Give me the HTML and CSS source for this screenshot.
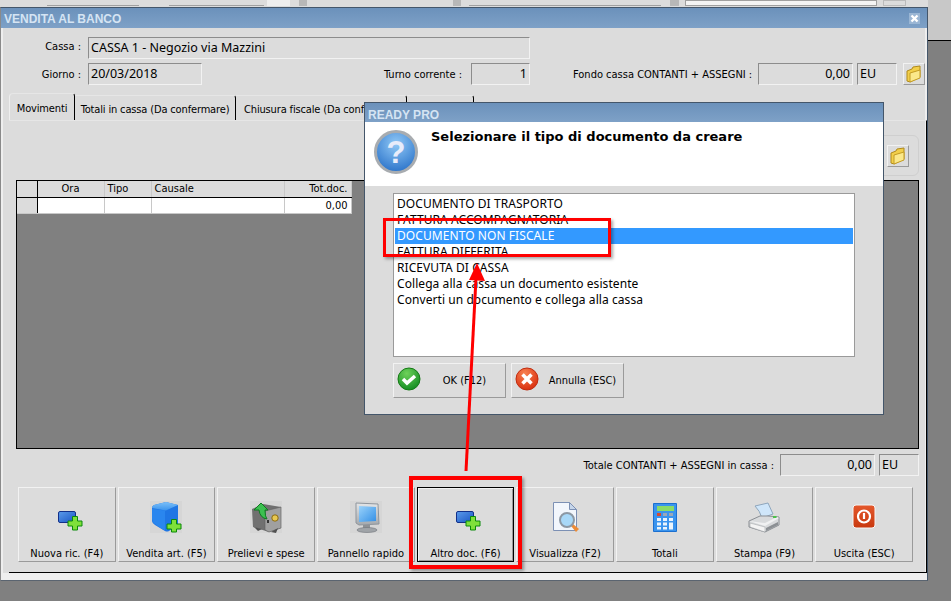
FILE: index.html

```html
<!DOCTYPE html>
<html lang="it">
<head>
  <meta charset="UTF-8">
  <title>Vendita al banco</title>
  <link rel="stylesheet" href="styles.css">
</head>
<body>

<svg class="defs" width="0" height="0">
  <defs>
    <linearGradient id="blueRect" x1="0" y1="0" x2="1" y2="1"><stop offset="0" stop-color="#5b9bea"/><stop offset="1" stop-color="#1a55c4"/></linearGradient>
    <linearGradient id="cubeTop" x1="0" y1="0" x2="0" y2="1"><stop offset="0" stop-color="#7cc0f8"/><stop offset="1" stop-color="#3a94ee"/></linearGradient>
    <linearGradient id="screen" x1="0" y1="0" x2="1" y2="1"><stop offset="0" stop-color="#9ad2fa"/><stop offset="1" stop-color="#3490e6"/></linearGradient>
    <linearGradient id="metal" x1="0" y1="0" x2="0" y2="1"><stop offset="0" stop-color="#e4e6e8"/><stop offset="1" stop-color="#a4a8ac"/></linearGradient>
    <linearGradient id="power" x1="0" y1="0" x2="0" y2="1"><stop offset="0" stop-color="#e4582c"/><stop offset="1" stop-color="#c8380e"/></linearGradient>
    <radialGradient id="qfill" cx="50%" cy="30%" r="70%"><stop offset="0" stop-color="#90c8f6"/><stop offset="1" stop-color="#2c74ca"/></radialGradient>
    <radialGradient id="okFill" cx="40%" cy="25%" r="80%"><stop offset="0" stop-color="#6fd25a"/><stop offset="1" stop-color="#108a20"/></radialGradient>
    <radialGradient id="koFill" cx="40%" cy="25%" r="80%"><stop offset="0" stop-color="#f88050"/><stop offset="1" stop-color="#d82c0c"/></radialGradient>
  </defs>
</svg>

<div class="backdrop">
  <div class="strip">
    <span class="strip-bar s1"></span>
    <span class="strip-bar s2"></span>
    <span class="strip-light s7"></span>
    <span class="strip-thumb s3"></span>
    <span class="strip-thumb s6"></span>
    <span class="strip-bar s4"></span>
    <span class="strip-thumb s5"></span>
    <span class="strip-field"></span>
    <span class="strip-btn"></span>
  </div>
</div>

<!-- finestra principale -->
<div class="window main-window">
  <div class="titlebar">
    <span class="title-text">VENDITA AL BANCO</span>
    <span class="close-btn">
      <svg width="11" height="11" viewBox="0 0 11 11"><path d="M2.500 2.500l6 6M8.500 2.500l-6 6" stroke="#fff" stroke-width="2.400"/></svg>
    </span>
  </div>
  <div class="window-body">

    <div class="row row-cassa">
      <label class="lbl lbl-first lbl-up">Cassa :</label>
      <div class="field field-cassa big">CASSA 1 - Negozio via Mazzini</div>
    </div>

    <div class="row row-giorno">
      <label class="lbl lbl-first">Giorno :</label>
      <div class="field field-giorno big">20/03/2018</div>
      <label class="lbl lbl-turno">Turno corrente :</label>
      <div class="field field-turno num big">1</div>
      <label class="lbl lbl-fondo">Fondo cassa CONTANTI + ASSEGNI :</label>
      <div class="field field-fondo num big">0,00</div>
      <div class="field field-eu big">EU</div>
      <div class="folder-btn folder-top">
        <svg width="18" height="18" viewBox="0 0 18 18"><path d="M2 6l5-2 1-2 7-1v11l-10 5-3-1z" fill="#f2cf4a" stroke="#b08a1c"/><path d="M5 8l10-3v8l-10 4z" fill="#fbe88a" stroke="#c49c24"/></svg>
      </div>
    </div>

    <div class="tabs">
      <div class="tab tab-active">Movimenti</div>
      <div class="tab tab-totali">Totali in cassa (Da confermare)</div>
      <div class="tab tab-chiusura">Chiusura fiscale (Da confermare)</div>
      <div class="tab tab-last"></div>
    </div>

    <div class="pane">
      <div class="toolbar">
        <div class="folder-btn folder-tool">
          <svg width="18" height="18" viewBox="0 0 18 18"><path d="M2 6l5-2 1-2 7-1v11l-10 5-3-1z" fill="#f2cf4a" stroke="#b08a1c"/><path d="M5 8l10-3v8l-10 4z" fill="#fbe88a" stroke="#c49c24"/></svg>
        </div>
      </div>

      <div class="grid-box">
        <table class="grid">
          <thead>
            <tr>
              <th class="c-ind"></th>
              <th class="c-ora center">Ora</th>
              <th class="c-tipo">Tipo</th>
              <th class="c-causale">Causale</th>
              <th class="c-tot right">Tot.doc.</th>
            </tr>
          </thead>
          <tbody>
            <tr>
              <td class="c-ind ind-cell"></td>
              <td></td>
              <td></td>
              <td></td>
              <td class="right">0,00</td>
            </tr>
          </tbody>
        </table>
      </div>

      <div class="total-row">
        <label class="lbl">Totale CONTANTI + ASSEGNI in cassa :</label>
        <div class="field field-fondo num big">0,00</div>
        <div class="field field-eu big">EU</div>
      </div>

      <div class="actions">
        <button class="action">
          <svg class="ico" width="32" height="32" viewBox="0 0 32 32"><rect x="7.500" y="10.500" width="17" height="11" rx="1.500" fill="url(#blueRect)" stroke="#12308a"/><path d="M21.500 15.500h5v4.500h4.500v5h-4.500v4h-5v-4H17v-5h4.500z" fill="#7fe03a" stroke="#0a8a0a"/></svg>
          <span>Nuova ric. (F4)</span>
        </button>
        <button class="action">
          <svg class="ico ico-bg" width="32" height="32" viewBox="0 0 32 32"><path d="M2 7q0-2 2-3l12-3 12 3v20l-9 6q-2 1-4 0l-10-6q-3-2-3-4z" fill="#1f76e4"/><path d="M2 7q0-2 2-3l12-3 12 3-11 5q-2 1-4 0z" fill="url(#cubeTop)"/><path d="M15 9.500v20l-3-1.500-7-5q-3-2-3-5V8z" fill="#2a86ee"/><path d="M21.500 18.500h5v4.500h4.500v5h-4.500v3h-5v-3H17v-5h4.500z" fill="#7fe03a" stroke="#0a8a0a"/></svg>
          <span>Vendita art. (F5)</span>
        </button>
        <button class="action">
          <svg class="ico ico-bg" width="32" height="32" viewBox="0 0 32 32"><path d="M2 8l11-5 18 3v21l-12 4-16-5z" fill="#707070"/><path d="M15 10l16-4v21l-12 4-4-2z" fill="#a0a0a0" stroke="#606060" stroke-width=".6"/><path d="M4 26l4 4 4-2zM21 31l5 1 2-5z" fill="#505050"/><path d="M17 19h2v3h-2z" fill="#333"/><circle cx="25" cy="17" r="3.200" fill="#e8c850" stroke="#8a6a14"/><path d="M11 2l7 7h-3q0 7 2 9-7-1-8-9H4z" fill="#3cc050" stroke="#0e7a20"/></svg>
          <span>Prelievi e spese</span>
        </button>
        <button class="action">
          <svg class="ico ico-bg" width="32" height="32" viewBox="0 0 32 32"><path d="M6 2l22 1 1 20-20 1-3-2z" fill="url(#metal)" stroke="#8f959c"/><path d="M9 5l17 1v14l-17 1z" fill="url(#screen)"/><path d="M13 24h7v4h-7z" fill="#8e9296"/><ellipse cx="17" cy="29" rx="10" ry="2.500" fill="#a0a4a8" stroke="#70747a" stroke-width=".6"/></svg>
          <span>Pannello rapido</span>
        </button>
        <button class="action action-focus">
          <svg class="ico" width="32" height="32" viewBox="0 0 32 32"><rect x="7.500" y="10.500" width="17" height="11" rx="1.500" fill="url(#blueRect)" stroke="#12308a"/><path d="M21.500 15.500h5v4.500h4.500v5h-4.500v4h-5v-4H17v-5h4.500z" fill="#7fe03a" stroke="#0a8a0a"/></svg>
          <span>Altro doc. (F6)</span>
        </button>
        <button class="action">
          <svg class="ico" width="32" height="32" viewBox="0 0 32 32"><path d="M4.500 1.500h16l7 7v21h-23z" fill="#f2f6fc" stroke="#7c90b4"/><path d="M20.500 1.500v7h7z" fill="#c6d6ea" stroke="#7c90b4"/><path d="M22 25l5 6 3-3-6-5z" fill="#ec8c38"/><circle cx="18" cy="19" r="7" fill="#a8d8f8" stroke="#8c98a4" stroke-width="2"/></svg>
          <span>Visualizza (F2)</span>
        </button>
        <button class="action">
          <svg class="ico" width="32" height="32" viewBox="0 0 32 32"><path d="M4.500 2.500h23v28h-23z" fill="#3a94ee" stroke="#1c70d0"/><rect x="8" y="5" width="17" height="5" fill="#8adc68"/><rect x="8" y="12" width="4" height="3" fill="#d84a30"/><rect x="14" y="12" width="4" height="3" fill="#9aa8b8"/><rect x="20" y="12" width="4" height="3" fill="#9aa8b8"/><path d="M8 17h4v3H8zM14 17h4v3h-4zM20 17h4v3h-4zM8 21.500h4v3H8zM14 21.500h4v3h-4zM20 21.500h4v7h-4zM8 26h4v2.500H8zM14 26h4v2.500h-4z" fill="#eaf4fc"/></svg>
          <span>Totali</span>
        </button>
        <button class="action">
          <svg class="ico" width="32" height="32" viewBox="0 0 32 32"><path d="M7 5l13-3 5 11-11 4q-2-7-7-12z" fill="#cfe6fa" stroke="#8ea6bc"/><path d="M1 20l11-5 8 0 11 1v8l-14 7-16-5z" fill="#d8dadc" stroke="#8a8e93"/><path d="M1 20l16 5 14-8-2-1-12 6z" fill="#f0f1f2"/><path d="M2 22l15 4v5L2 26z" fill="#f4f4f4" stroke="#9a9ea2" stroke-width=".5"/><path d="M18 27l12-6v3l-12 6z" fill="#8c9094"/><rect x="25" y="15" width="3.500" height="2" fill="#4cc04c"/></svg>
          <span>Stampa (F9)</span>
        </button>
        <button class="action">
          <svg class="ico" width="32" height="32" viewBox="0 0 32 32"><rect x="5" y="4" width="22" height="23" rx="3" fill="url(#power)" stroke="#f6f6f6"/><circle cx="16" cy="15.500" r="6" fill="none" stroke="#fff" stroke-width="2.200"/><path d="M16 12v6" stroke="#fff" stroke-width="2.200"/></svg>
          <span>Uscita (ESC)</span>
        </button>
      </div>
    </div>
  </div>
</div>

<!-- dialogo tipo documento -->
<div class="window dialog">
  <div class="titlebar dialog-title">
    <span class="title-text">READY PRO</span>
  </div>
  <div class="dialog-head">
    <svg class="q-ico" width="46" height="46" viewBox="0 0 46 46">
      <circle cx="23" cy="23" r="20.500" fill="url(#qfill)" stroke="#a8acb0" stroke-width="3"/>
      <text x="23" y="34" class="q-mark">?</text>
    </svg>
    <h2 class="dialog-heading">Selezionare il tipo di documento da creare</h2>
  </div>
  <div class="dialog-body">
    <ul class="doc-list">
      <li>DOCUMENTO DI TRASPORTO</li>
      <li>FATTURA ACCOMPAGNATORIA</li>
      <li class="selected">DOCUMENTO NON FISCALE</li>
      <li>FATTURA DIFFERITA</li>
      <li>RICEVUTA DI CASSA</li>
      <li>Collega alla cassa un documento esistente</li>
      <li>Converti un documento e collega alla cassa</li>
    </ul>
    <div class="dialog-buttons">
      <button class="dlg-btn">
        <svg width="24" height="24" viewBox="0 0 24 24"><circle cx="12" cy="12" r="11" fill="url(#okFill)" stroke="#157a15"/><path d="M6 12l4 4 8-7" fill="none" stroke="#fff" stroke-width="3.500"/></svg>
        <span>OK (F12)</span>
      </button>
      <button class="dlg-btn">
        <svg width="24" height="24" viewBox="0 0 24 24"><circle cx="12" cy="12" r="11" fill="url(#koFill)" stroke="#c02c10"/><path d="M7.500 7.500l9 9M16.500 7.500l-9 9" fill="none" stroke="#fff" stroke-width="3.500"/></svg>
        <span>Annulla (ESC)</span>
      </button>
    </div>
  </div>
</div>

<!-- annotazioni rosse -->
<div class="mark mark-list"></div>
<div class="mark mark-btn"></div>
<svg class="arrow" width="40" height="230" viewBox="0 0 40 230">
  <path d="M11 221L21 28" stroke="#f00" stroke-width="3" fill="none"/>
  <path d="M22 13l8 18-16-1z" fill="#f00"/>
</svg>

</body>
</html>
```

FILE: styles.css

```css
* {
  box-sizing: border-box;
}
html, body {
  margin: 0;
  height: 100%;
}
body {
  width: 951px;
  height: 601px;
  overflow: hidden;
  background-color: #808080;
  font-family: "DejaVu Sans Condensed", "DejaVu Sans", sans-serif;
  font-size: 11px;
  color: #000;
  position: relative;
}
ul {
  list-style: none;
  margin: 0;
  padding: 0;
}
.defs {
  position: absolute;
}

/* quello che si vede dietro */
.backdrop {
  height: 41px;
  margin-left: 928px;
  background-color: #c8c8c8;
  border-bottom: 1px solid #000;
}
.strip {
  position: absolute;
  left: 0;
  top: 0;
  width: 928px;
  height: 7px;
  background-color: #dcdcdc;
}
.strip span {
  position: absolute;
  top: 0;
  height: 6px;
}
.strip-bar {
  border-bottom: 1px solid #a0a0a0;
}
.s1 { left: 47px; width: 92px; }
.s2 { left: 169px; width: 95px; }
.s7 { left: 267px; width: 23px; background-color: #eeeeee; }
.s3 { left: 299px; width: 8px; background-color: #b8b8b8; }
.s6 { left: 453px; width: 8px; background-color: #b8b8b8; }
.s4 { left: 469px; width: 192px; }
.s5 { left: 670px; width: 9px; background-color: #b8b8b8; }
.strip-field {
  left: 685px;
  width: 192px;
  border: 1px solid #a0a0a0;
  background-color: #f4f4f4;
}
.strip-btn {
  left: 883px;
  width: 23px;
  border: 1px solid #bbb;
}

/* finestre */
.window {
  position: absolute;
  border: 1px solid #44566a;
  background-color: #dcdcdc;
}
.main-window {
  left: 0;
  top: 7px;
  width: 928px;
  height: 574px;
  border-left-color: #8a8a8a;
  border-bottom-color: #5a6470;
}
.titlebar {
  height: 20px;
  background: linear-gradient(#6b91bb, #7ea1c7);
  display: flex;
  align-items: center;
  justify-content: space-between;
  padding: 2px 3px 0;
}
.title-text {
  color: #d5e4f3;
  font-family: "Liberation Sans", Arial, sans-serif;
  font-weight: bold;
  font-size: 12px;
}
.close-btn {
  width: 11px;
  height: 11px;
  margin: -2px 4px 0 0;
  background-color: #9ab6d4;
}
.close-btn svg {
  display: block;
}
.window-body {
  height: 552px;
  border: solid #eeeeee;
  border-width: 0 2px 7px 2px;
  padding-top: 9px;
}

.row {
  display: flex;
  align-items: center;
  height: 22px;
}
.row-giorno {
  margin-top: 4px;
}
.lbl {
  white-space: nowrap;
}
.lbl-first {
  width: 78px;
  text-align: right;
  margin-right: 7px;
}
.lbl-up {
  margin-bottom: 3px;
}
.field {
  height: 22px;
  padding: 2px 2px;
  line-height: 16px;
  background-color: #dcdcdc;
  border: 1px solid;
  border-color: #8c8c8c #f2f2f2 #f2f2f2 #8c8c8c;
  white-space: nowrap;
}
.big {
  font-family: "Noto Sans", sans-serif;
  font-size: 12.500px;
}
.num {
  text-align: right;
}
.field-cassa { width: 442px; }
.field-giorno { width: 114px; }
.lbl-turno { margin-left: 182px; width: 87px; }
.field-turno { width: 59px; }
.lbl-fondo { margin-left: 43px; width: 185px; }
.field-fondo { width: 95px; }
.field-eu { width: 40px; margin-left: 4px; }
.folder-btn {
  width: 22px;
  height: 22px;
  display: flex;
  align-items: center;
  justify-content: center;
  border: 1px solid;
  border-color: #f2f2f2 #9a9a9a #9a9a9a #f2f2f2;
}
.folder-top {
  margin-left: 6px;
}

/* schede */
.tabs {
  display: flex;
  height: 27px;
  margin-top: 8px;
  margin-left: 6px;
  align-items: flex-end;
  letter-spacing: -.15px;
}
.tab {
  height: 25px;
  padding-top: 7px;
  text-align: center;
  border-right: 1px solid #000;
  border-top: 1px solid #e6e6e6;
  border-top-right-radius: 3px;
  white-space: nowrap;
  overflow: hidden;
}
.tab-active {
  width: 66px;
  height: 27px;
  border-left: 1px solid #eee;
  border-top-left-radius: 4px;
  padding-top: 8px;
}
.tab-totali { width: 161px; }
.tab-chiusura {
  width: 171px;
  text-align: left;
  padding-left: 8px;
}
.tab-last { width: 67px; }

.pane {
  height: 453px;
  width: 918px;
  margin-left: 6px;
  border-top: 1px solid #e6e6e6;
  border-right: 1px solid #000;
  border-bottom: 1px solid #000;
  padding: 14px 0 0 7px;
}
.toolbar {
  height: 41px;
  width: 300px;
  margin-left: 603px;
  display: flex;
  align-items: center;
  justify-content: flex-end;
  padding-right: 9px;
  border: 1px solid #cfcfcf;
  border-radius: 6px;
}
.grid-box {
  height: 269px;
  width: 903px;
  margin-top: 4px;
  background-color: #808080;
  border: 1px solid #000;
}
.grid {
  border-collapse: collapse;
  table-layout: fixed;
  width: 334px;
}
.grid th, .grid td {
  font-weight: normal;
  height: 16px;
  padding: 0 3px;
  text-align: left;
  border-right: 1px solid #c8c8c8;
  white-space: nowrap;
  line-height: 15px;
}
.grid th {
  background-color: #dcdcdc;
  border-bottom: 1px solid #000;
}
.grid td {
  background-color: #fff;
  border-bottom: 1px solid #c8c8c8;
}
.grid .center { text-align: center; }
.grid .right { text-align: right; }
.c-ind { width: 20px; }
.c-ora { width: 67px; }
.c-tipo { width: 47px; }
.c-causale { width: 133px; }
.c-tot { width: 67px; }
.grid .c-ind {
  border-right: 1px solid #000;
}
.grid .ind-cell {
  background-color: #dcdcdc;
}

.total-row {
  display: flex;
  align-items: center;
  justify-content: flex-end;
  width: 903px;
  height: 22px;
  margin-top: 5px;
}
.total-row .field-fondo {
  margin-left: 6px;
}

/* pulsantiera */
.actions {
  display: grid;
  grid-template-columns: repeat(9, 1fr);
  gap: 2px;
  width: 895px;
  height: 75px;
  margin-top: 11px;
  margin-left: 2px;
}
.action, .dlg-btn {
  font-family: inherit;
  font-size: 11px;
  color: #000;
  background-color: #dcdcdc;
  border: 1px solid;
  border-color: #f2f2f2 #9a9a9a #9a9a9a #f2f2f2;
  padding: 0;
}
.action {
  display: flex;
  flex-direction: column;
  align-items: center;
  padding-top: 13px;
}
.action span {
  margin-top: 14px;
}
.action-focus {
  outline: 1px solid #000;
  outline-offset: -1px;
  box-shadow: inset 1px 1px 0 #f2f2f2, inset -1px -1px 0 #9a9a9a;
}
.ico {
  display: block;
}
.ico-bg {
  background-color: #d6d6d6;
}

/* dialogo */
.dialog {
  left: 364px;
  top: 102px;
  width: 520px;
  height: 313px;
}
.dialog-title {
  height: 19px;
  padding-top: 4px;
}
.dialog-head {
  height: 64px;
  background-color: #fff;
  display: flex;
  align-items: flex-start;
}
.q-ico {
  margin: 7px 0 0 8px;
}
.q-mark {
  font-family: "Liberation Sans", Arial, sans-serif;
  font-size: 31px;
  font-weight: bold;
  fill: #e8ecfa;
  text-anchor: middle;
}
.dialog-heading {
  margin: 6px 0 0 12px;
  font-family: "DejaVu Sans", sans-serif;
  font-size: 13px;
  font-weight: bold;
  line-height: 18px;
}
.dialog-body {
  padding: 7px 0 0 28px;
}
.doc-list {
  width: 462px;
  height: 164px;
  padding: 2px 1px;
  background-color: #fff;
  border: 1px solid #9a9a9a;
  font-family: "Noto Sans", sans-serif;
  font-size: 12px;
  letter-spacing: .07px;
}
.doc-list li {
  height: 16px;
  line-height: 16px;
  padding-left: 2px;
}
.doc-list .selected {
  background-color: #3399ff;
  color: #fff;
}
.dialog-buttons {
  display: flex;
  gap: 5px;
  margin-top: 6px;
}
.dlg-btn {
  width: 113px;
  height: 35px;
  display: flex;
  align-items: center;
  padding-left: 3px;
}
.dlg-btn svg {
  margin-bottom: 4px;
}
.dlg-btn span {
  flex: 1;
  text-align: center;
  padding-left: 3px;
}

/* annotazioni */
.mark {
  position: absolute;
  border: 3px solid #f00;
  box-shadow: 2px 2px 3px rgba(0, 0, 0, .35);
}
.mark-list {
  left: 383px;
  top: 218px;
  width: 228px;
  height: 39px;
}
.mark-btn {
  left: 409px;
  top: 476px;
  width: 113px;
  height: 93px;
  border-width: 4px;
}
.arrow {
  position: absolute;
  left: 455px;
  top: 250px;
}
```
